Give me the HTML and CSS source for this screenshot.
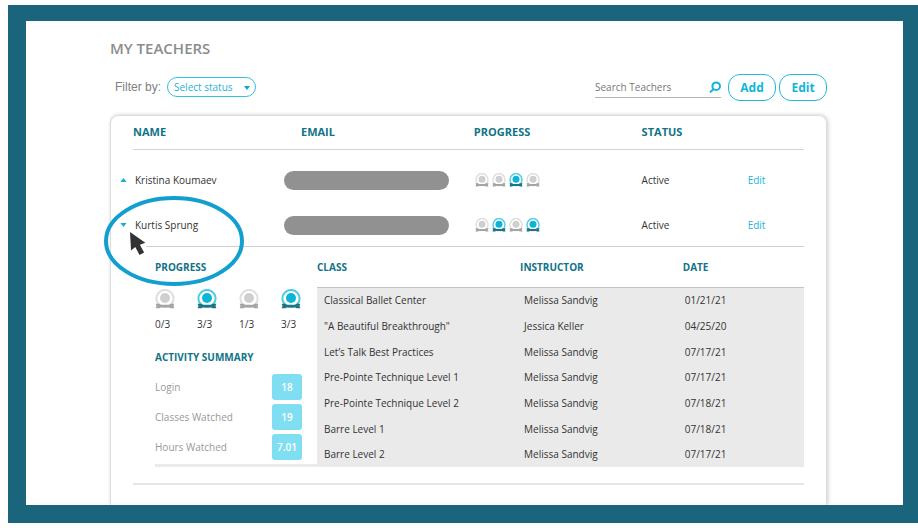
FILE: index.html
```html
<!DOCTYPE html>
<html lang="en">
<head>
  <meta charset="UTF-8">
  <meta name="viewport" content="width=device-width, initial-scale=1">
  <title>My Teachers</title>
  <link rel="stylesheet" href="styles.css">
</head>
<body>
  <!-- Badge shape shared by all progress icons -->
  <svg class="sprite" aria-hidden="true">
    <symbol id="badge" viewBox="0 0 20 20">
      <circle class="badge-ring" cx="10" cy="9.5" r="8.6"/>
      <circle class="badge-dot" cx="10" cy="9" r="5"/>
      <path class="badge-base" d="M.6 14.8h4l1.2.9h8.4l1.2-.9h4l-.9 2.2.9 2.2h-4l-1-.8H5.6l-1 .8h-4l.9-2.2z"/>
    </symbol>
  </svg>

  <main class="frame">
    <div class="content">
      <h1>MY TEACHERS</h1>

      <div class="toolbar">
        <label class="filter-label" for="status">Filter by:</label>
        <div class="select-wrap">
          <select id="status">
            <option>Select status</option>
            <option>Active</option>
            <option>Inactive</option>
          </select>
          <svg class="select-arrow" viewBox="0 0 6 4"><path d="M0 0h6L3 4z"/></svg>
        </div>
        <form class="search">
          <input type="text" id="search" placeholder="Search Teachers" aria-label="Search Teachers">
          <button type="button" class="search-button" aria-label="Search">
            <svg viewBox="0 0 12 12"><circle cx="7.2" cy="5.2" r="3.8"/><path d="M4.4 8.2L1 11.4"/></svg>
          </button>
        </form>
        <div class="actions">
          <button type="button" class="pill-button">Add</button>
          <button type="button" class="pill-button">Edit</button>
        </div>
      </div>

      <section class="card">
        <table class="teachers">
          <thead>
            <tr>
              <th class="col-name">NAME</th>
              <th class="col-email">EMAIL</th>
              <th class="col-progress">PROGRESS</th>
              <th class="col-status">STATUS</th>
              <th class="col-edit"></th>
            </tr>
          </thead>
          <tbody>
            <tr>
              <td>
                <div class="name">
                  <button type="button" class="toggle" aria-label="Expand Kristina Koumaev"><svg viewBox="0 0 6 4"><path d="M0 4h6L3 0z"/></svg></button>
                  <span>Kristina Koumaev</span>
                </div>
              </td>
              <td><div class="hidden-email"></div></td>
              <td>
                <div class="badges">
                  <svg class="badge"><use href="#badge"/></svg>
                  <svg class="badge"><use href="#badge"/></svg>
                  <svg class="badge done"><use href="#badge"/></svg>
                  <svg class="badge"><use href="#badge"/></svg>
                </div>
              </td>
              <td>Active</td>
              <td><a href="#">Edit</a></td>
            </tr>
            <tr>
              <td class="marked">
                <div class="name">
                  <button type="button" class="toggle" aria-label="Collapse Kurtis Sprung"><svg viewBox="0 0 6 4"><path d="M0 0h6L3 4z"/></svg></button>
                  <span>Kurtis Sprung</span>
                </div>
                <svg class="marker" viewBox="0 0 140 90" aria-hidden="true">
                  <ellipse cx="70" cy="45" rx="68" ry="43"/>
                  <path d="M26 36l1 18.5 4.3-3.6 4.2 8.1 4.6-2.4-4.2-7.8 5.4-2z"/>
                </svg>
              </td>
              <td><div class="hidden-email"></div></td>
              <td>
                <div class="badges">
                  <svg class="badge"><use href="#badge"/></svg>
                  <svg class="badge done"><use href="#badge"/></svg>
                  <svg class="badge"><use href="#badge"/></svg>
                  <svg class="badge done"><use href="#badge"/></svg>
                </div>
              </td>
              <td>Active</td>
              <td><a href="#">Edit</a></td>
            </tr>
          </tbody>
        </table>

        <!-- Expanded details for Kurtis Sprung -->
        <div class="details">
          <div class="summary">
            <h2>PROGRESS</h2>
            <ul class="scores">
              <li><svg class="badge"><use href="#badge"/></svg>0/3</li>
              <li><svg class="badge done"><use href="#badge"/></svg>3/3</li>
              <li><svg class="badge"><use href="#badge"/></svg>1/3</li>
              <li><svg class="badge done"><use href="#badge"/></svg>3/3</li>
            </ul>
            <h2>ACTIVITY SUMMARY</h2>
            <dl class="activity">
              <div><dt>Login</dt><dd>18</dd></div>
              <div><dt>Classes Watched</dt><dd>19</dd></div>
              <div><dt>Hours Watched</dt><dd>7.01</dd></div>
            </dl>
          </div>
          <table class="classes">
            <thead>
              <tr><th class="col-class">CLASS</th><th class="col-instructor">INSTRUCTOR</th><th class="col-date">DATE</th></tr>
            </thead>
            <tbody>
              <tr><td>Classical Ballet Center</td><td>Melissa Sandvig</td><td>01/21/21</td></tr>
              <tr><td>"A Beautiful Breakthrough"</td><td>Jessica Keller</td><td>04/25/20</td></tr>
              <tr><td>Let’s Talk Best Practices</td><td>Melissa Sandvig</td><td>07/17/21</td></tr>
              <tr><td>Pre-Pointe Technique Level 1</td><td>Melissa Sandvig</td><td>07/17/21</td></tr>
              <tr><td>Pre-Pointe Technique Level 2</td><td>Melissa Sandvig</td><td>07/18/21</td></tr>
              <tr><td>Barre Level 1</td><td>Melissa Sandvig</td><td>07/18/21</td></tr>
              <tr><td>Barre Level 2</td><td>Melissa Sandvig</td><td>07/17/21</td></tr>
            </tbody>
          </table>
        </div>
        <hr class="row-end">
      </section>
    </div>
  </main>
</body>
</html>
```
FILE: styles.css
```css
* {
  box-sizing: border-box;
}
body {
  margin: 0;
  padding: 5px 0 5px 8px;
  background: #fefefe;
  color: #333;
  font-family: "Open Sans", "Noto Sans", sans-serif;
  font-size: 10px;
  line-height: 16px;
}
button, input, select {
  font-family: inherit;
}
button {
  cursor: pointer;
}
.sprite {
  display: none;
}
.frame {
  display: flex;
  min-height: calc(100vh - 10px);
  border: solid #1a657c;
  border-width: 16px 15px 18px 18px;
  background: #fff;
}
.content {
  display: flex;
  flex-direction: column;
  flex: 1;
  padding: 15px 76px 0 84px;
}
h1 {
  margin: 0;
  color: #8c8c8c;
  font-size: 15px;
  font-weight: 600;
  line-height: 24px;
}

/* Filter, search and buttons */
.toolbar {
  display: flex;
  align-items: center;
  height: 28px;
  margin-top: 13px;
  padding-left: 5px;
}
.filter-label {
  color: #808080;
  font-family: "Liberation Sans", sans-serif;
  font-size: 12px;
}
.select-wrap {
  position: relative;
  margin-left: 6px;
}
.select-wrap select {
  appearance: none;
  width: 89px;
  height: 20px;
  padding: 0 16px 0 6px;
  border: 1px solid #35bfe0;
  border-radius: 10px;
  background: #fff;
  color: #1fb3d9;
  font-size: 10px;
}
.select-arrow {
  position: absolute;
  top: 9px;
  right: 6px;
  width: 6px;
  height: 4px;
  fill: #0fa6cd;
  pointer-events: none;
}
.search {
  display: flex;
  align-items: center;
  width: 126px;
  height: 22px;
  margin-left: auto;
  border-bottom: 1px solid #b5b5b5;
}
.search input {
  flex: 1;
  min-width: 0;
  padding: 0;
  border: 0;
  outline: 0;
  background: none;
  color: #666;
  font-size: 10px;
}
.search input::placeholder {
  color: #777;
}
.search-button {
  width: 12px;
  height: 12px;
  padding: 0;
  border: 0;
  background: none;
}
.search-button svg {
  display: block;
  fill: none;
  stroke: #12b3d8;
  stroke-width: 2;
}
.actions {
  display: flex;
  gap: 3px;
  margin-left: 7px;
}
.pill-button {
  width: 48px;
  height: 27px;
  padding: 0;
  border: 1px solid #22b8dc;
  border-radius: 12px;
  background: #fff;
  color: #12b5da;
  font-size: 12px;
  font-weight: 700;
}

/* Teachers table */
.card {
  flex: 1;
  margin-top: 14px;
  padding: 0 22px;
  border: 1px solid #dcdcdc;
  border-bottom: 0;
  border-radius: 8px 8px 0 0;
  box-shadow: 1px 0 4px rgba(0, 0, 0, 0.2);
  clip-path: inset(-6px -6px 0 -6px);
}
table {
  width: 100%;
  border-collapse: collapse;
  table-layout: fixed;
}
th, td {
  padding: 0;
  text-align: left;
}
th, h2 {
  color: #117387;
  font-weight: 700;
}
.teachers th {
  height: 33px;
  border-bottom: 1px solid #d4d4d4;
  font-size: 11px;
}
.teachers tbody td {
  height: 42px;
}
.teachers tbody tr:first-child td {
  padding-top: 7px;
  height: 55px;
}
.teachers .col-name {
  width: 22.5%;
}
.teachers .col-email {
  width: 28.3%;
  padding-left: 17px;
}
.teachers .col-progress {
  width: 25%;
}
.teachers .col-status {
  width: 15.8%;
}
.name {
  display: flex;
  align-items: center;
  gap: 8px;
  margin-left: -13px;
}
.toggle {
  width: 7px;
  height: 10px;
  padding: 0;
  border: 0;
  background: none;
}
.toggle svg {
  display: block;
  width: 7px;
  height: 4px;
  fill: #1aa9d0;
}
.hidden-email {
  width: 165px;
  height: 19px;
  border-radius: 10px;
  background: #919191;
}
a {
  color: #22b3da;
  text-decoration: none;
}
.marked {
  position: relative;
}
.marker {
  position: absolute;
  top: -8px;
  left: -29px;
  width: 140px;
  height: 90px;
  pointer-events: none;
}
.marker ellipse {
  fill: none;
  stroke: #129fd0;
  stroke-width: 4;
}
.marker path {
  fill: #333;
}

/* Progress badges */
.badges {
  display: flex;
  gap: 3px;
  padding-left: 1px;
}
.badge {
  display: block;
  width: 14px;
  height: 14px;
  --ring: #dedede;
  --dot: #cfcfcf;
  --base: #a5a5a5;
}
.badge.done {
  --ring: #4fcbe6;
  --dot: #0db4da;
  --base: #1f7386;
}
.badge-ring {
  fill: #fff;
  stroke: var(--ring);
  stroke-width: 2;
}
.badge-dot {
  fill: var(--dot);
}
.badge-base {
  fill: var(--base);
}

/* Expanded row */
.details {
  display: flex;
  margin-left: 13px;
  padding-left: 9px;
  border-top: 1px solid #d0d0d0;
}
.summary {
  flex: 0 0 162px;
  border-bottom: 3px solid #ebebeb;
}
h2 {
  margin: 0;
  font-size: 10px;
  line-height: 16px;
}
.summary h2:first-child {
  margin-top: 12px;
}
.scores {
  display: flex;
  gap: 22px;
  margin: 14px 0 17px;
  padding: 0;
  list-style: none;
}
.scores li {
  width: 20px;
}
.scores .badge {
  width: 20px;
  height: 20px;
  margin-bottom: 7px;
}
.activity {
  display: flex;
  flex-direction: column;
  gap: 4px;
  margin: 9px 15px 4px 0;
}
.activity div {
  display: flex;
  align-items: center;
  justify-content: space-between;
}
.activity dt {
  color: #999;
}
.activity dd {
  width: 30px;
  margin: 0;
  border-radius: 3px;
  background: #7fdef2;
  color: #fff;
  font-weight: 600;
  line-height: 26px;
  text-align: center;
}
.classes {
  flex: 1;
  height: 220px;
}
.classes th {
  height: 40px;
  font-size: 10px;
}
.classes tbody {
  border-top: 1px solid #c4c4c4;
  background: #eaeaea;
}
.classes td:nth-child(1) {
  padding-left: 7px;
}
.classes td:nth-child(2) {
  padding-left: 4px;
}
.classes td:nth-child(3) {
  padding-left: 2px;
}
.col-class {
  width: 41.7%;
}
.col-instructor {
  width: 33.4%;
}
.row-end {
  margin: 16px 0 18px;
  border: 0;
  border-top: 2px solid #e6e6e6;
}
```
